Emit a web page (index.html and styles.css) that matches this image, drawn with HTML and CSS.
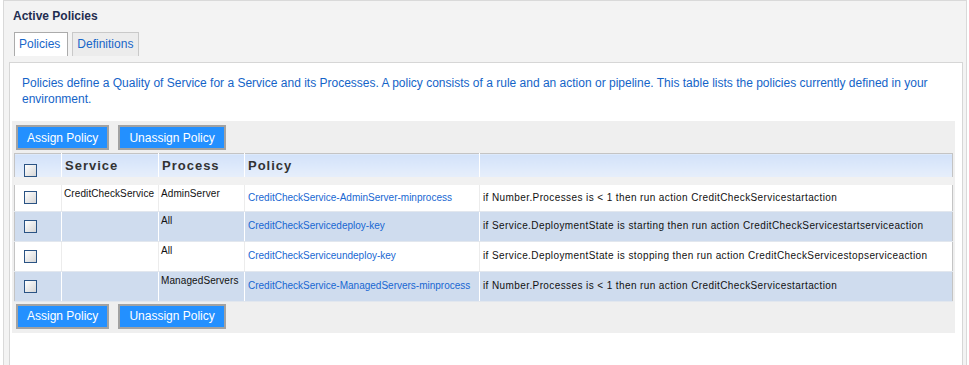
FILE: index.html
```html
<!DOCTYPE html>
<html lang="en">
  <head>
    <meta charset="UTF-8" />
    <title>Active Policies</title>
    <link rel="stylesheet" href="styles.css">
  </head>
  <body>
    <div class="page">
      <h2 class="title">Active Policies</h2>
      <div class="tabs">
        <span class="tab active">Policies</span>
        <span class="tab">Definitions</span>
      </div>

      <div class="panel">
        <p class="intro">
          Policies define a Quality of Service for a Service and its Processes. A policy consists of a rule and an action or pipeline. This table lists the policies currently defined in your environment.
        </p>

        <div class="strip">
          <div class="actions">
            <button>Assign Policy</button>
            <button>Unassign Policy</button>
          </div>

          <table class="policies">
            <thead>
              <tr>
                <th class="col-check"><span class="check"></span></th>
                <th class="col-service">Service</th>
                <th class="col-process">Process</th>
                <th class="col-policy">Policy</th>
                <th></th>
              </tr>
            </thead>
            <tbody>
              <tr>
                <td class="col-check"><span class="check"></span></td>
                <td class="top">CreditCheckService</td>
                <td class="top">AdminServer</td>
                <td><a href="#">CreditCheckService-AdminServer-minprocess</a></td>
                <td class="rule">if Number.Processes is &lt; 1 then run action CreditCheckServicestartaction</td>
              </tr>
              <tr class="alt">
                <td class="col-check"><span class="check"></span></td>
                <td class="top"></td>
                <td class="top">All</td>
                <td><a href="#">CreditCheckServicedeploy-key</a></td>
                <td class="rule">if Service.DeploymentState is starting then run action CreditCheckServicestartserviceaction</td>
              </tr>
              <tr>
                <td class="col-check"><span class="check"></span></td>
                <td class="top"></td>
                <td class="top">All</td>
                <td><a href="#">CreditCheckServiceundeploy-key</a></td>
                <td class="rule">if Service.DeploymentState is stopping then run action CreditCheckServicestopserviceaction</td>
              </tr>
              <tr class="alt">
                <td class="col-check"><span class="check"></span></td>
                <td class="top"></td>
                <td class="top">ManagedServers</td>
                <td><a href="#">CreditCheckService-ManagedServers-minprocess</a></td>
                <td class="rule">if Number.Processes is &lt; 1 then run action CreditCheckServicestartaction</td>
              </tr>
            </tbody>
          </table>

          <div class="actions">
            <button>Assign Policy</button>
            <button>Unassign Policy</button>
          </div>
        </div>
      </div>
    </div>
  </body>
</html>
```

FILE: styles.css
```css
body {
  margin: 0;
  font-family: "Liberation Sans", Arial, sans-serif;
  background: #fff;
  overflow: hidden;
}
.page {
  margin-left: 3px;
  width: 954px;
  height: 420px;
  padding: 8px 3px 0 5px;
  border: 1px solid #d9d9d9;
  border-bottom: none;
  background: #f3f3f3;
}
.title {
  margin: 0 0 0 4px;
  font-size: 12px;
  line-height: 15px;
  color: #1f2d50;
}
.tabs {
  display: flex;
  gap: 4px;
  margin: 8px 0 6px 5px;
}
.tab {
  height: 23px;
  line-height: 23px;
  padding: 0 5px 0 4px;
  font-size: 12px;
  color: #1766c9;
  background: #ececec;
  border: 1px solid #c9c9c9;
  border-bottom: none;
}
.tab.active {
  padding-right: 7px;
  background: #fff;
  border-color: #ababab;
}
.panel {
  height: 400px;
  padding: 0 7px 0 2px;
  background: #fff;
  border: 1px solid #d6d6d6;
}
.intro {
  margin: 0 0 14px;
  padding: 12px 0 0 10px;
  font-size: 12px;
  line-height: 16px;
  color: #1464c8;
}
.strip {
  padding: 4px 0;
  background: #efefef;
}
.actions {
  display: flex;
  gap: 9px;
  padding-left: 4px;
}
.actions button {
  height: 25px;
  padding: 0 9px;
  font-family: inherit;
  font-size: 12px;
  color: #fff;
  background: #2390ff;
  border: 2px solid #a2a2a2;
}
.policies {
  width: 939px;
  margin: 3px 2px 2px;
  border-collapse: collapse;
  border: 1px solid #c4c4c4;
  background: #fff;
  font-size: 10px;
  color: #111;
}
.policies th {
  height: 23px;
  padding: 0 3px;
  text-align: left;
  font-size: 13px;
  letter-spacing: 1px;
  color: #333;
  background: linear-gradient(#d2e2fa, #e7effb);
  border-left: 1px solid #fff;
  border-bottom: 8px solid #f1f1f1;
}
.policies th.col-check {
  vertical-align: bottom;
  line-height: 12px;
}
.policies td {
  box-sizing: border-box;
  height: 30px;
  padding: 0 3px;
  line-height: 12px;
  border-left: 1px solid #ececec;
  border-bottom: 1px solid #e2e7ee;
}
.policies tr.alt td {
  background: #cfdcee;
  border-left-color: #fff;
}
.policies td.top {
  vertical-align: top;
  padding-top: 3px;
  padding-left: 2px;
  letter-spacing: 0.1px;
}
.policies td.rule {
  letter-spacing: 0.4px;
}
.policies .col-check {
  width: 34px;
  padding-left: 9px;
  border-left: none;
}
.col-service {
  width: 90px;
}
.col-process {
  width: 79px;
}
.col-policy {
  width: 228px;
}
.policies a {
  color: #1767d2;
  text-decoration: none;
}
.check {
  display: inline-block;
  width: 11px;
  height: 11px;
  vertical-align: middle;
  border: 1px solid #2a5384;
  background: linear-gradient(135deg, #fff, #d6d6d6);
}
```
